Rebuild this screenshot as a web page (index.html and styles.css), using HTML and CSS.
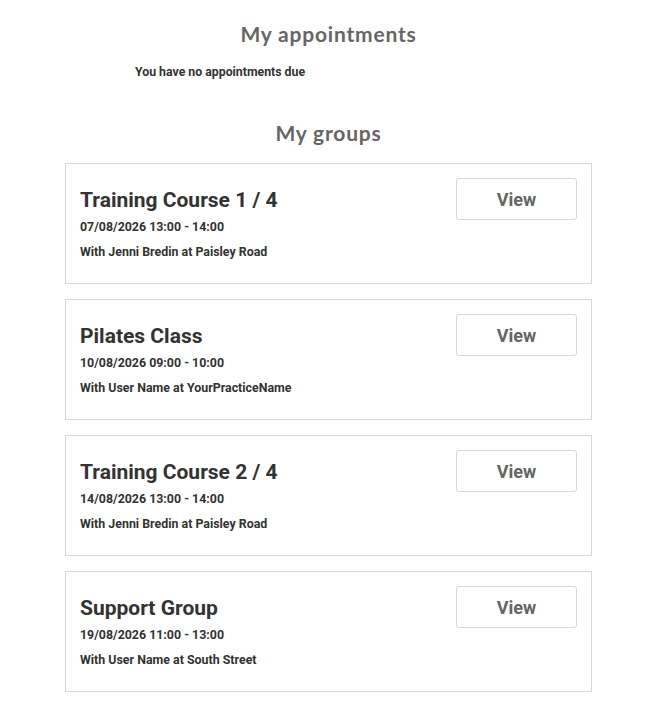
FILE: index.html
```html
<!DOCTYPE html>
<html>
  <head>
    <meta charset="UTF-8">
    <title>My appointments</title>
    <link rel="stylesheet" href="styles.css">
  </head>
  <body>
    <div class="page">
      <h2 class="section-title">My appointments</h2>
      <p class="empty">You have no appointments due</p>

      <h2 class="section-title groups-title">My groups</h2>
      <div class="groups">
        <div class="group-card">
          <div class="group-info">
            <h3>Training Course 1 / 4</h3>
            <p class="when">07/08/2026 13:00 - 14:00</p>
            <p class="who">With Jenni Bredin at Paisley Road</p>
          </div>
          <button class="view-btn">View</button>
        </div>
        <div class="group-card">
          <div class="group-info">
            <h3>Pilates Class</h3>
            <p class="when">10/08/2026 09:00 - 10:00</p>
            <p class="who">With User Name at YourPracticeName</p>
          </div>
          <button class="view-btn">View</button>
        </div>
        <div class="group-card">
          <div class="group-info">
            <h3>Training Course 2 / 4</h3>
            <p class="when">14/08/2026 13:00 - 14:00</p>
            <p class="who">With Jenni Bredin at Paisley Road</p>
          </div>
          <button class="view-btn">View</button>
        </div>
        <div class="group-card">
          <div class="group-info">
            <h3>Support Group</h3>
            <p class="when">19/08/2026 11:00 - 13:00</p>
            <p class="who">With User Name at South Street</p>
          </div>
          <button class="view-btn">View</button>
        </div>
      </div>
    </div>
  </body>
</html>
```

FILE: styles.css
```css
body {
  margin: 0;
  background-color: #fff;
  font-family: Roboto, "Liberation Sans", sans-serif;
  color: #333;
}
.page {
  width: 527px;
  margin: 0 0 0 65px;
  padding: 20px 0 10px;
}
.section-title {
  margin: 0;
  text-align: center;
  font-family: Lato, "DejaVu Sans", sans-serif;
  font-weight: 700;
  font-size: 21px;
  letter-spacing: 0.8px;
  color: #666;
  line-height: 28px;
}
.empty {
  margin: 16px 0 0 70px;
  font-size: 12.3px;
  font-weight: 700;
  line-height: 16px;
}
.groups-title {
  margin-top: 39px;
}
.groups {
  margin-top: 16px;
  display: flex;
  flex-direction: column;
  gap: 15px;
}
.group-card {
  display: flex;
  justify-content: space-between;
  align-items: flex-start;
  height: 121px;
  box-sizing: border-box;
  border: 1px solid #d8d8d8;
  padding: 14px 14px 0 14px;
}
.group-info h3 {
  margin: 8px 0 0;
  font-size: 21px;
  font-weight: 700;
  line-height: 28px;
  color: #333;
}
.group-info p {
  margin: 0;
  font-size: 12.4px;
  font-weight: 700;
  line-height: 16px;
}
.group-info .when {
  margin-top: 5px;
}
.group-info .who {
  margin-top: 9px;
}
.view-btn {
  width: 121px;
  height: 42px;
  background-color: #fff;
  border: 1px solid #d8d8d8;
  border-radius: 3px;
  font-family: Roboto, "Liberation Sans", sans-serif;
  font-size: 18px;
  font-weight: 700;
  color: #666;
  cursor: pointer;
}
```
